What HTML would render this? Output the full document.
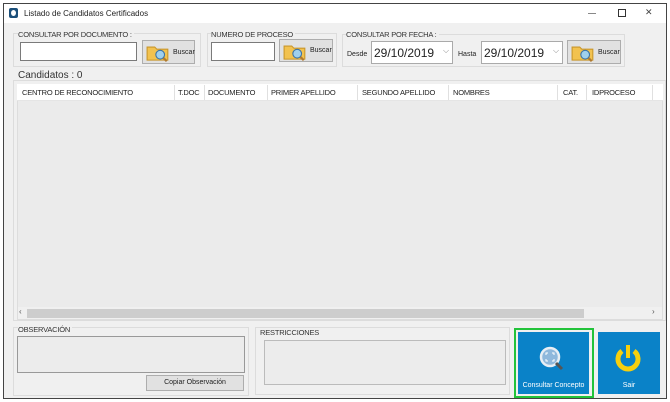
<!DOCTYPE html>
<html><head><style>
*{margin:0;padding:0;box-sizing:border-box}
body{width:670px;height:402px;background:#fff;position:relative;overflow:hidden;font-family:"Liberation Sans",sans-serif;font-size:8px;color:#222}
.a{position:absolute}
.win{left:3px;top:3px;width:664px;height:396px;border:1px solid #444;background:#f0f0f0}
.tb{left:4px;top:4px;width:662px;height:19px;background:#fff}
.grp{border:1px solid #dcdcdc}
.tx{background:#fff;border:1px solid #7a7a7a}
.btn{background:#e1e1e1;border:1px solid #adadad;font-size:7px;text-align:center}
.lbl{font-size:7.5px;letter-spacing:-.2px;color:#333}
.hd{font-size:7.5px;top:88px;letter-spacing:-.2px}
.sep{top:85px;width:1px;height:15px;background:#e0e0e0}
.folder{position:absolute;left:3px;top:2px;width:24px;height:19px}
</style></head><body>
<div class="a win"></div>
<div class="a tb"></div>
<div class="a" style="left:9px;top:8px;width:9px;height:10px;background:#1b4f7a;border-radius:2px"></div>
<div class="a" style="left:11px;top:10px;width:5px;height:6px;background:#fff;border-radius:50%"></div>
<div class="a" style="left:24px;top:9px;font-size:8px">Listado de Candidatos Certificados</div>
<div class="a" style="left:588px;top:13px;width:8px;height:1px;background:#888"></div>
<div class="a" style="left:618px;top:9px;width:8px;height:8px;border:1px solid #333"></div>
<div class="a" style="left:645px;top:7px;font-size:9px;color:#444">✕</div>

<div class="a grp" style="left:13px;top:33px;width:188px;height:34px"></div>
<div class="a lbl" style="left:18px;top:30px;background:#f0f0f0;padding-right:2px">CONSULTAR POR DOCUMENTO :</div>
<div class="a tx" style="left:20px;top:42px;width:117px;height:19px"></div>
<div class="a btn" style="left:142px;top:40px;width:53px;height:24px"><svg class="folder" viewBox="0 0 22 16"><path d="M1 3h7l2 2h10v10H1z" fill="#f2c24f" stroke="#c9962a"/><circle cx="13" cy="10" r="4" fill="#9fd0ee" stroke="#3b74a8"/><path d="M16 13l3 3" stroke="#b07a30" stroke-width="2"/></svg><span class="a" style="left:30px;top:8px">Buscar</span></div>

<div class="a grp" style="left:207px;top:33px;width:130px;height:34px"></div>
<div class="a lbl" style="left:211px;top:30px;background:#f0f0f0;padding-right:2px">NUMERO DE PROCESO</div>
<div class="a tx" style="left:211px;top:42px;width:64px;height:19px"></div>
<div class="a btn" style="left:279px;top:39px;width:54px;height:23px"><svg class="folder" viewBox="0 0 22 16"><path d="M1 3h7l2 2h10v10H1z" fill="#f2c24f" stroke="#c9962a"/><circle cx="13" cy="10" r="4" fill="#9fd0ee" stroke="#3b74a8"/><path d="M16 13l3 3" stroke="#b07a30" stroke-width="2"/></svg><span class="a" style="left:30px;top:7px">Buscar</span></div>

<div class="a grp" style="left:342px;top:34px;width:283px;height:33px"></div>
<div class="a lbl" style="left:346px;top:30px;background:#f0f0f0;padding-right:2px">CONSULTAR POR FECHA :</div>
<div class="a" style="left:347px;top:51px;font-size:7px">Desde</div>
<div class="a tx" style="left:371px;top:41px;width:82px;height:23px;border-color:#aaa;font-size:12px;padding:4px 0 0 2px">29/10/2019</div>
<div class="a" style="left:443px;top:46px;font-size:8px;color:#888">⌵</div>
<div class="a" style="left:458px;top:51px;font-size:7px">Hasta</div>
<div class="a tx" style="left:481px;top:41px;width:82px;height:23px;border-color:#aaa;font-size:12px;padding:4px 0 0 2px">29/10/2019</div>
<div class="a" style="left:553px;top:46px;font-size:8px;color:#888">⌵</div>
<div class="a btn" style="left:567px;top:40px;width:54px;height:24px"><svg class="folder" viewBox="0 0 22 16"><path d="M1 3h7l2 2h10v10H1z" fill="#f2c24f" stroke="#c9962a"/><circle cx="13" cy="10" r="4" fill="#9fd0ee" stroke="#3b74a8"/><path d="M16 13l3 3" stroke="#b07a30" stroke-width="2"/></svg><span class="a" style="left:30px;top:8px">Buscar</span></div>

<div class="a" style="left:18px;top:70px;font-size:10px;color:#333">Candidatos : 0</div>
<div class="a grp" style="left:13px;top:80px;width:653px;height:241px"></div>
<div class="a" style="left:17px;top:84px;width:646px;height:236px;background:#ebebeb;border:1px solid #ddd"></div>
<div class="a" style="left:17px;top:84px;width:646px;height:17px;background:#fff;border-bottom:1px solid #e5e5e5"></div>
<div class="a hd" style="left:22px">CENTRO DE RECONOCIMIENTO</div>
<div class="a sep" style="left:174px"></div><div class="a hd" style="left:178px">T.DOC</div>
<div class="a sep" style="left:204px"></div><div class="a hd" style="left:208px">DOCUMENTO</div>
<div class="a sep" style="left:267px"></div><div class="a hd" style="left:271px">PRIMER APELLIDO</div>
<div class="a sep" style="left:357px"></div><div class="a hd" style="left:362px">SEGUNDO APELLIDO</div>
<div class="a sep" style="left:448px"></div><div class="a hd" style="left:453px">NOMBRES</div>
<div class="a sep" style="left:557px"></div><div class="a hd" style="left:563px">CAT.</div>
<div class="a sep" style="left:586px"></div><div class="a hd" style="left:592px">IDPROCESO</div>
<div class="a sep" style="left:652px"></div>
<div class="a" style="left:18px;top:307px;width:644px;height:12px;background:#f0f0f0"></div>
<div class="a" style="left:27px;top:309px;width:557px;height:9px;background:#cdcdcd"></div>
<div class="a" style="left:19px;top:307px;font-size:8px;color:#555">‹</div>
<div class="a" style="left:652px;top:307px;font-size:8px;color:#555">›</div>

<div class="a grp" style="left:13px;top:327px;width:236px;height:69px"></div>
<div class="a lbl" style="left:18px;top:325px;background:#f0f0f0;padding-right:2px">OBSERVACIÓN</div>
<div class="a tx" style="left:17px;top:336px;width:228px;height:37px;border-color:#999;background:#ececec"></div>
<div class="a btn" style="left:146px;top:375px;width:98px;height:16px;padding-top:3px">Copiar Observación</div>

<div class="a grp" style="left:255px;top:327px;width:255px;height:68px"></div>
<div class="a lbl" style="left:260px;top:328px">RESTRICCIONES</div>
<div class="a tx" style="left:264px;top:340px;width:242px;height:45px;border-color:#bbb;background:#ececec"></div>

<div class="a" style="left:514px;top:328px;width:80px;height:70px;border:2px solid #22c33a"></div>
<div class="a" style="left:518px;top:332px;width:71px;height:62px;background:#0a82c8"></div>
<svg class="a" style="left:536px;top:345px" width="34" height="30" viewBox="0 0 34 30"><circle cx="14" cy="12" r="9" fill="#8fb8dc" stroke="#e8eef4" stroke-width="2.5"/><path d="M10 10v-2h2M16 8h2v2M18 14v2h-2M12 16h-2v-2" stroke="#fff" fill="none"/><path d="M20 18l6 6" stroke="#555" stroke-width="3"/></svg>
<div class="a" style="left:518px;top:382px;width:71px;text-align:center;color:#fff;font-size:7px">Consultar Concepto</div>
<div class="a" style="left:598px;top:332px;width:62px;height:62px;background:#0a82c8"></div>
<svg class="a" style="left:612px;top:342px" width="32" height="32" viewBox="0 0 32 32"><path d="M10 9A10 10 0 1 0 22 9" fill="none" stroke="#f6cf0e" stroke-width="5"/><rect x="14" y="3" width="4" height="13" fill="#f6cf0e"/></svg>
<div class="a" style="left:598px;top:382px;width:62px;text-align:center;color:#fff;font-size:7px">Sair</div>
</body></html>
